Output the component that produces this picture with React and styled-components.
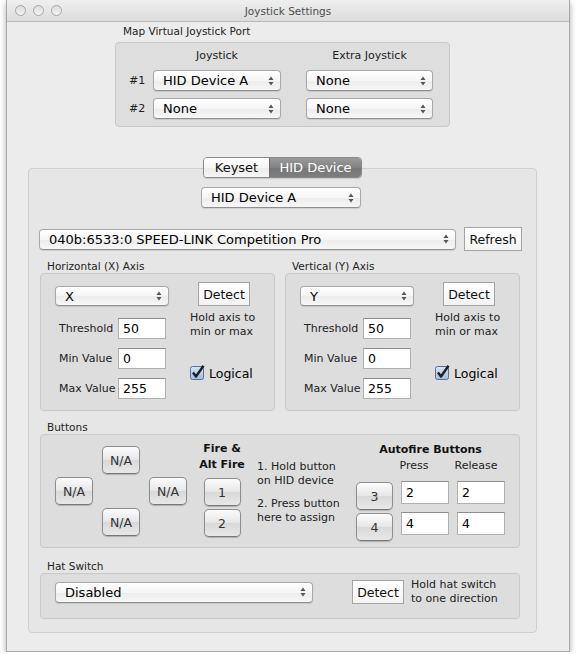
import styled, { createGlobalStyle } from 'styled-components';

const GlobalStyle = createGlobalStyle`
  html, body { margin: 0; padding: 0; background: #ffffff; }
  body { font-family: "DejaVu Sans", "Liberation Sans", sans-serif; color: #000; }
`;

const Window = styled.div`
  margin-left: 6px;
  width: 564px;
  height: 652px;
  box-sizing: border-box;
  background: #ececec;
  border: 1px solid #a9a9a9;
  border-top: none;
  box-shadow: 0 3px 6px rgba(0, 0, 0, 0.35);
  display: flex;
  flex-direction: column;
`;

const TitleBar = styled.div`
  height: 22px;
  box-sizing: border-box;
  background: linear-gradient(#efefef, #dcdcdc);
  border-bottom: 1px solid #b9b9b9;
  display: flex;
  align-items: center;
  padding-left: 8px;
`;

const Lights = styled.div`
  display: flex;
  gap: 7px;
`;

const Light = styled.span`
  width: 11px;
  height: 11px;
  border-radius: 50%;
  box-sizing: border-box;
  border: 1px solid #a6a6a6;
  background: linear-gradient(#dcdcdc, #f3f3f3);
`;

const Title = styled.div`
  flex: 1;
  text-align: center;
  font-size: 10.5px;
  color: #4d4d4d;
  margin-right: 55px;
`;

const SectionLabel = styled.div`
  font-size: 10.5px;
  line-height: 13px;
  color: #222;
  margin: ${(p) => p.$m || '0'};
`;

const PortBox = styled.div`
  margin-left: 108px;
  width: 335px;
  height: 85px;
  box-sizing: border-box;
  background: #dedede;
  border: 1px solid #c8c8c8;
  border-radius: 4px;
  padding: 6px 0 0 13px;
`;

const PortRow = styled.div`
  display: flex;
  align-items: center;
  margin-top: ${(p) => p.$mt || 0}px;
`;

const RowLabel = styled.div`
  width: 24px;
  font-size: 11px;
  color: #222;
`;

const ColHead = styled.div`
  width: ${(p) => p.$w}px;
  margin-left: ${(p) => p.$ml || 0}px;
  text-align: center;
  font-size: 11px;
  line-height: 13px;
  color: #222;
`;

const PopupBox = styled.div`
  display: flex;
  align-items: center;
  justify-content: space-between;
  width: ${(p) => p.$w}px;
  height: ${(p) => p.$h || 21}px;
  margin-left: ${(p) => p.$ml || 0}px;
  margin-top: ${(p) => p.$mt || 0}px;
  box-sizing: border-box;
  padding: 0 6px 0 9px;
  background: linear-gradient(#ffffff, #f6f6f6 50%, #ececec 51%, #f7f7f7);
  border: 1px solid #a8a8a8;
  border-bottom-color: #8f8f8f;
  border-radius: 4px;
  box-shadow: 0 1px 1px rgba(0, 0, 0, 0.1);
  font-size: 13px;
  color: #000;
  white-space: nowrap;
  flex-shrink: 0;
`;

const Arrows = () => (
  <svg width="6" height="10" viewBox="0 0 6 10">
    <path d="M3 0.5 L5.5 4 L0.5 4 Z" fill="#555" />
    <path d="M3 9.5 L5.5 6 L0.5 6 Z" fill="#555" />
  </svg>
);

const Popup = ({ children, ...rest }) => (
  <PopupBox {...rest}>
    <span>{children}</span>
    <Arrows />
  </PopupBox>
);

const TabArea = styled.div`
  margin-top: 30px;
  margin-left: 21px;
  width: 509px;
  display: flex;
  flex-direction: column;
  align-items: center;
`;

const Segmented = styled.div`
  display: flex;
  height: 21px;
  box-sizing: border-box;
  border: 1px solid #8a8a8a;
  border-radius: 4px;
  overflow: hidden;
  position: relative;
  z-index: 1;
  box-shadow: 0 1px 1px rgba(0, 0, 0, 0.12);
`;

const Segment = styled.div`
  display: flex;
  align-items: center;
  justify-content: center;
  width: ${(p) => p.$w}px;
  font-size: 13px;
  color: ${(p) => (p.$on ? '#ffffff' : '#111')};
  background: ${(p) =>
    p.$on
      ? 'linear-gradient(#9a9a9a, #828282 50%, #767676 51%, #7e7e7e)'
      : 'linear-gradient(#ffffff, #f5f5f5 50%, #ebebeb 51%, #f5f5f5)'};
  border-left: ${(p) => (p.$on ? '1px solid #6e6e6e' : 'none')};
`;

const TabBox = styled.div`
  margin-top: -10px;
  width: 509px;
  height: 465px;
  box-sizing: border-box;
  background: #e6e6e6;
  border: 1px solid #cfcfcf;
  border-radius: 4px;
  display: flex;
  flex-direction: column;
`;

const DeviceRow = styled.div`
  display: flex;
  align-items: center;
  gap: 8px;
  margin: 19px 0 0 10px;
`;

const SquareButton = styled.div`
  display: flex;
  align-items: center;
  justify-content: center;
  width: ${(p) => p.$w}px;
  height: 24px;
  margin-left: ${(p) => p.$ml || 0}px;
  margin-top: ${(p) => p.$mt || 0}px;
  box-sizing: border-box;
  background: linear-gradient(#ffffff, #f3f3f3);
  border: 1px solid #a4a4a4;
  font-size: 12.5px;
  color: #111;
  flex-shrink: 0;
`;

const AxisRow = styled.div`
  display: flex;
  gap: 10px;
  margin: 9px 0 0 11px;
`;

const Column = styled.div`
  display: flex;
  flex-direction: column;
  margin: ${(p) => p.$m || '0'};
`;

const Group = styled.div`
  width: ${(p) => p.$w}px;
  height: ${(p) => p.$h}px;
  box-sizing: border-box;
  background: #dddddd;
  border: 1px solid #c9c9c9;
  border-radius: 4px;
  display: flex;
  align-items: flex-start;
`;

const FormGrid = styled.div`
  display: grid;
  grid-template-columns: 63px 48px;
  grid-auto-rows: 21px;
  row-gap: 9px;
  margin-top: 12px;
  align-items: center;
`;

const FieldLabel = styled.div`
  font-size: 11px;
  color: #222;
  padding-left: 4px;
`;

const Field = styled.div`
  width: ${(p) => p.$w || 48}px;
  height: ${(p) => p.$h || 21}px;
  box-sizing: border-box;
  background: #ffffff;
  border: 1px solid #b0b0b0;
  border-top-color: #8e8e8e;
  font-size: 12.5px;
  display: flex;
  align-items: center;
  padding-left: 4px;
  flex-shrink: 0;
`;

const Hint = styled.div`
  font-size: 11px;
  line-height: 14px;
  color: #222;
  white-space: nowrap;
  margin-top: ${(p) => p.$mt || 0}px;
  margin-left: ${(p) => p.$ml || 0}px;
`;

const CheckRow = styled.div`
  display: flex;
  align-items: center;
  gap: 3px;
  margin-top: 26px;
  font-size: 12.5px;
`;

const CheckBox = () => (
  <svg width="16" height="16" viewBox="0 0 16 16">
    <defs>
      <linearGradient id="cb" x1="0" y1="0" x2="0" y2="1">
        <stop offset="0" stopColor="#d9e6f7" />
        <stop offset="1" stopColor="#9fbbe0" />
      </linearGradient>
    </defs>
    <rect x="0.5" y="1.5" width="13" height="13" rx="2" fill="url(#cb)" stroke="#5c6f8c" />
    <path d="M3 7.5 L6 11.5 L13.5 0.8" fill="none" stroke="#1a1f2b" strokeWidth="2.4" strokeLinejoin="round" />
  </svg>
);

const AxisGroup = ({ label, axis }) => (
  <Column>
    <SectionLabel $m="0 0 0 7px">{label}</SectionLabel>
    <Group $w={235} $h={138}>
      <Column $m="0 0 0 14px">
        <Popup $w={114} $h={20} $mt={12}>{axis}</Popup>
        <FormGrid>
          <FieldLabel>Threshold</FieldLabel>
          <Field>50</Field>
          <FieldLabel>Min Value</FieldLabel>
          <Field>0</Field>
          <FieldLabel>Max Value</FieldLabel>
          <Field>255</Field>
        </FormGrid>
      </Column>
      <Column $m="0 0 0 21px">
        <SquareButton $w={52} $ml={8} $mt={8}>Detect</SquareButton>
        <Hint $mt={5}>
          Hold axis to
          <br />
          min or max
        </Hint>
        <CheckRow>
          <CheckBox />
          Logical
        </CheckRow>
      </Column>
    </Group>
  </Column>
);

const WideSection = styled.div`
  display: flex;
  flex-direction: column;
  margin: ${(p) => p.$m};
`;

const CrossGrid = styled.div`
  display: grid;
  grid-template-columns: repeat(3, 38px);
  grid-template-rows: repeat(3, 28px);
  column-gap: 9px;
  row-gap: 3px;
  margin: 11px 0 0 14px;
`;

const RoundButton = styled.div`
  display: flex;
  align-items: center;
  justify-content: center;
  width: ${(p) => p.$w || 38}px;
  height: 28px;
  box-sizing: border-box;
  grid-column: ${(p) => p.$col || 'auto'};
  grid-row: ${(p) => p.$row || 'auto'};
  margin-top: ${(p) => p.$mt || 0}px;
  background: linear-gradient(#fcfcfc, #e6e6e6 50%, #d9d9d9 51%, #e8e8e8);
  border: 1px solid #8e8e8e;
  border-bottom-color: #767676;
  border-radius: 5px;
  box-shadow: 0 1px 1px rgba(0, 0, 0, 0.2);
  font-size: 12.5px;
  color: #333;
  flex-shrink: 0;
`;

const BoldHead = styled.div`
  font-size: 11px;
  font-weight: bold;
  line-height: 16px;
  text-align: center;
  color: #111;
  white-space: nowrap;
`;

const FireColumn = styled.div`
  width: 58px;
  display: flex;
  flex-direction: column;
  align-items: center;
  gap: 3px;
  margin: 6px 0 0 6px;
`;

const Instructions = styled.div`
  width: 99px;
  margin: 25px 0 0 6px;
  display: flex;
  flex-direction: column;
  gap: 9px;
`;

const AutoColumn = styled.div`
  display: flex;
  flex-direction: column;
  width: 149px;
  margin-top: 7px;
`;

const AutoHead = styled.div`
  display: grid;
  grid-template-columns: 33px 50px 74px;
  font-size: 11px;
  line-height: 13px;
  color: #222;
  margin-top: 1px;
`;

const HeadCell = styled.span`
  text-align: center;
`;

const AutoRow = styled.div`
  display: flex;
  align-items: flex-start;
  gap: 8px;
  margin-top: ${(p) => p.$mt || 0}px;
`;

const HatRow = styled.div`
  display: flex;
  align-items: center;
  margin-top: 4px;
`;

export default function App() {
  return (
    <>
      <GlobalStyle />
      <Window>
        <TitleBar>
          <Lights>
            <Light />
            <Light />
            <Light />
          </Lights>
          <Title>Joystick Settings</Title>
        </TitleBar>

        <SectionLabel $m="3px 0 4px 116px">Map Virtual Joystick Port</SectionLabel>
        <PortBox>
          <PortRow>
            <ColHead $w={128} $ml={24}>Joystick</ColHead>
            <ColHead $w={127} $ml={25}>Extra Joystick</ColHead>
          </PortRow>
          <PortRow $mt={8}>
            <RowLabel>#1</RowLabel>
            <Popup $w={128}>HID Device A</Popup>
            <Popup $w={127} $ml={25}>None</Popup>
          </PortRow>
          <PortRow $mt={7}>
            <RowLabel>#2</RowLabel>
            <Popup $w={128}>None</Popup>
            <Popup $w={127} $ml={25}>None</Popup>
          </PortRow>
        </PortBox>

        <TabArea>
          <Segmented>
            <Segment $w={65}>Keyset</Segment>
            <Segment $w={91} $on>HID Device</Segment>
          </Segmented>
          <TabBox>
            <Popup $w={160} $ml={172} $mt={18}>HID Device A</Popup>
            <DeviceRow>
              <Popup $w={417}>040b:6533:0 SPEED-LINK Competition Pro</Popup>
              <SquareButton $w={58}>Refresh</SquareButton>
            </DeviceRow>

            <AxisRow>
              <AxisGroup label="Horizontal (X) Axis" axis="X" />
              <AxisGroup label="Vertical (Y) Axis" axis="Y" />
            </AxisRow>

            <WideSection $m="10px 0 0 11px">
              <SectionLabel $m="0 0 0 7px">Buttons</SectionLabel>
              <Group $w={480} $h={114}>
                <CrossGrid>
                  <RoundButton $col={2} $row={1}>N/A</RoundButton>
                  <RoundButton $col={1} $row={2}>N/A</RoundButton>
                  <RoundButton $col={3} $row={2}>N/A</RoundButton>
                  <RoundButton $col={2} $row={3}>N/A</RoundButton>
                </CrossGrid>
                <FireColumn>
                  <BoldHead>
                    Fire &amp;
                    <br />
                    Alt Fire
                  </BoldHead>
                  <RoundButton $w={37} $mt={2}>1</RoundButton>
                  <RoundButton $w={37}>2</RoundButton>
                </FireColumn>
                <Instructions>
                  <Hint>
                    1. Hold button
                    <br />
                    on HID device
                  </Hint>
                  <Hint>
                    2. Press button
                    <br />
                    here to assign
                  </Hint>
                </Instructions>
                <AutoColumn>
                  <BoldHead>Autofire Buttons</BoldHead>
                  <AutoHead>
                    <span />
                    <HeadCell>Press</HeadCell>
                    <HeadCell>Release</HeadCell>
                  </AutoHead>
                  <AutoRow $mt={9}>
                    <RoundButton $w={37} $mt={1}>3</RoundButton>
                    <Field $h={23}>2</Field>
                    <Field $h={23}>2</Field>
                  </AutoRow>
                  <AutoRow $mt={2}>
                    <RoundButton $w={37} $mt={1}>4</RoundButton>
                    <Field $h={23}>4</Field>
                    <Field $h={23}>4</Field>
                  </AutoRow>
                </AutoColumn>
              </Group>
            </WideSection>

            <WideSection $m="11px 0 0 11px">
              <SectionLabel $m="1px 0 0 7px">Hat Switch</SectionLabel>
              <Group $w={480} $h={46}>
                <HatRow>
                  <Popup $w={258} $ml={14}>Disabled</Popup>
                  <SquareButton $w={52} $ml={39}>Detect</SquareButton>
                  <Hint $ml={7}>
                    Hold hat switch
                    <br />
                    to one direction
                  </Hint>
                </HatRow>
              </Group>
            </WideSection>
          </TabBox>
        </TabArea>
      </Window>
    </>
  );
}
